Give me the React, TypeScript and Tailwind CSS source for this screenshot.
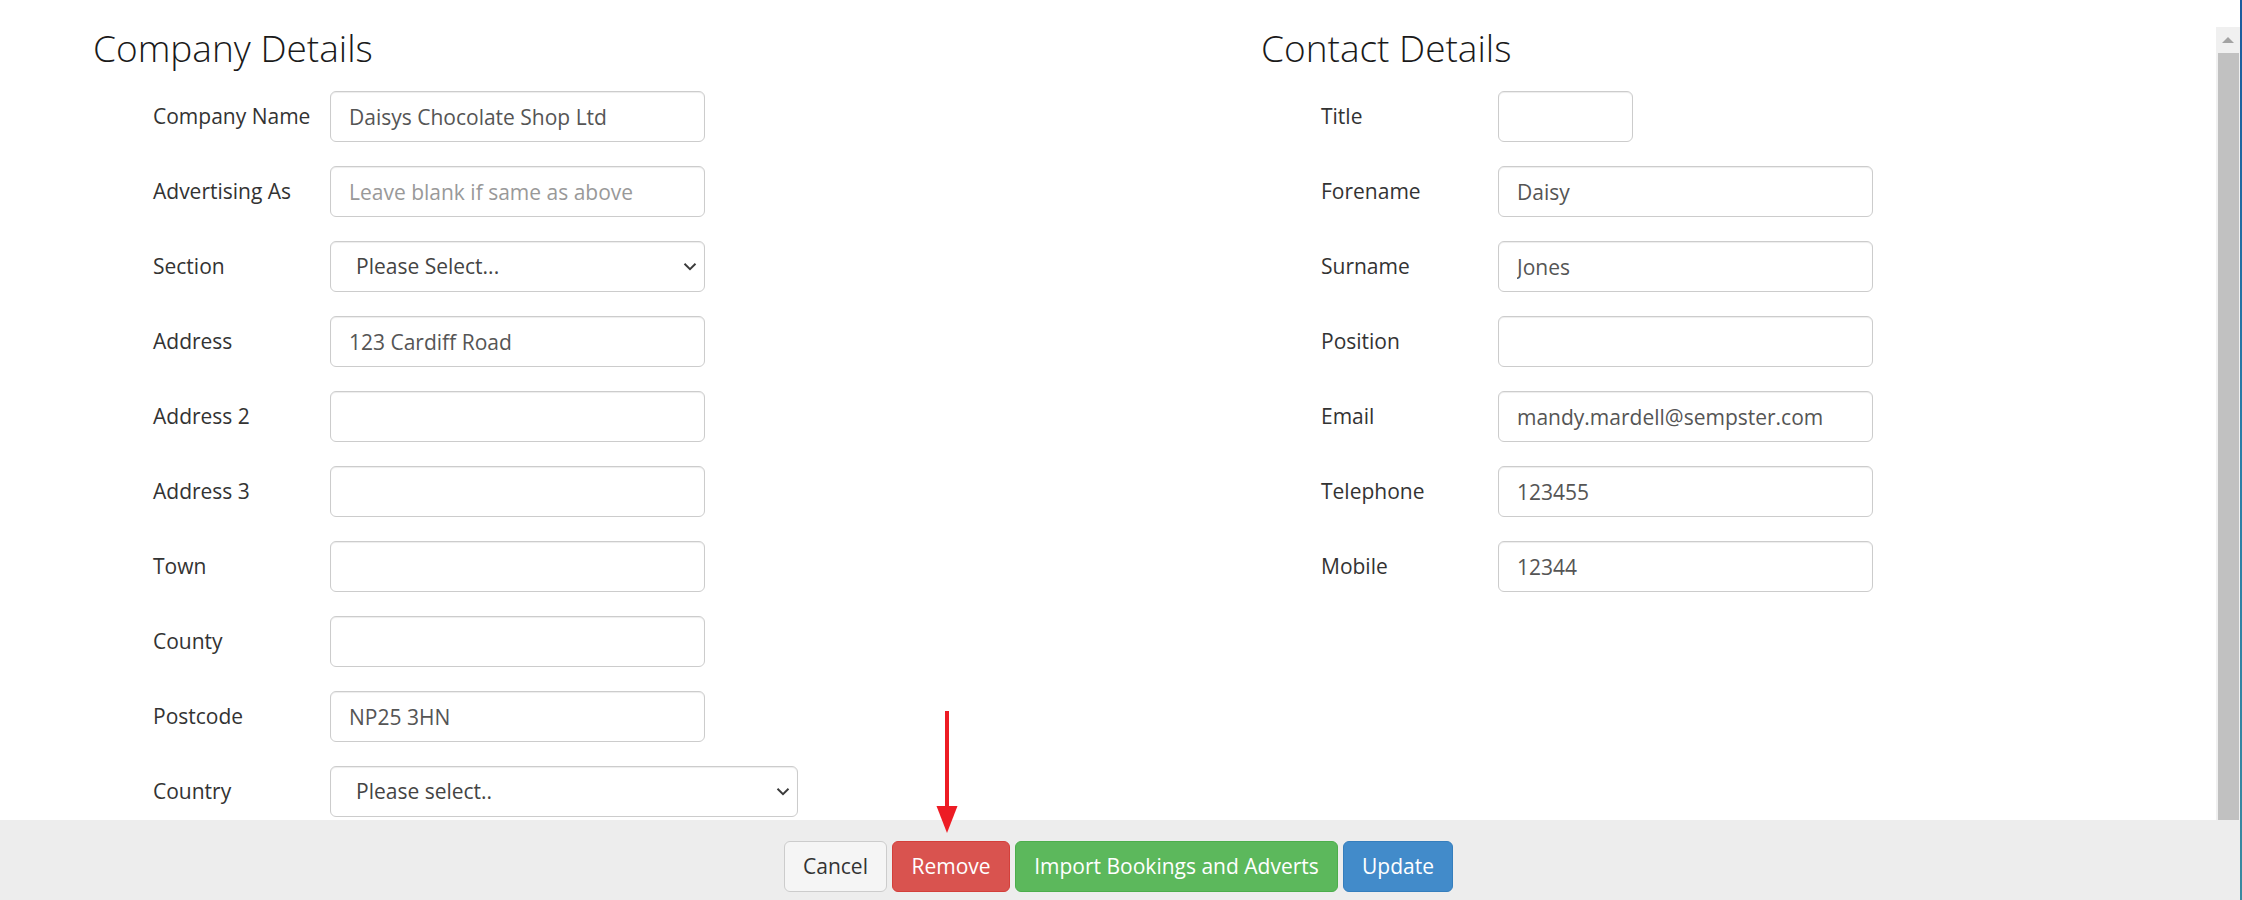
import React from "react";

type Field = { label: string; value?: string; placeholder?: string; select?: boolean; w?: string };

const left: Field[] = [
  { label: "Company Name", value: "Daisys Chocolate Shop Ltd" },
  { label: "Advertising As", placeholder: "Leave blank if same as above" },
  { label: "Section", value: "Please Select...", select: true },
  { label: "Address", value: "123 Cardiff Road" },
  { label: "Address 2", value: "" },
  { label: "Address 3", value: "" },
  { label: "Town", value: "" },
  { label: "County", value: "" },
  { label: "Postcode", value: "NP25 3HN" },
  { label: "Country", value: "Please select..", select: true, w: "w-[468px]" },
];

const right: Field[] = [
  { label: "Title", value: "", w: "w-[135px]" },
  { label: "Forename", value: "Daisy" },
  { label: "Surname", value: "Jones" },
  { label: "Position", value: "" },
  { label: "Email", value: "mandy.mardell@sempster.com" },
  { label: "Telephone", value: "123455" },
  { label: "Mobile", value: "12344" },
];

function Chevron() {
  return (
    <svg width="14" height="9" viewBox="0 0 14 9" className="shrink-0">
      <path d="M1.5 1.8 L7 7.2 L12.5 1.8" fill="none" stroke="#3a3a3a" strokeWidth="1.9" />
    </svg>
  );
}

function Row({ f }: { f: Field }) {
  const w = f.w ?? "w-[375px]";
  return (
    <div className="flex items-center h-[51px]">
      <label className="w-[177px] shrink-0 text-[#333]">{f.label}</label>
      {f.select ? (
        <div
          className={`${w} h-[51px] border border-[#ccc] rounded-[6px] bg-white shadow-[inset_0_1px_1px_rgba(0,0,0,0.075)] flex items-center justify-between pl-[25px] pr-[7px] text-[#444]`}
        >
          <span>{f.value}</span>
          <Chevron />
        </div>
      ) : (
        <input
          readOnly
          value={f.value ?? ""}
          placeholder={f.placeholder}
          className={`${w} h-[51px] border border-[#ccc] rounded-[6px] bg-white shadow-[inset_0_1px_1px_rgba(0,0,0,0.075)] px-[18px] text-[#555] placeholder:text-[#999] outline-none`}
        />
      )}
    </div>
  );
}

function Section({ title, fields, width }: { title: string; fields: Field[]; width: string }) {
  return (
    <section className={`${width} shrink-0 pt-[28px]`}>
      <h3 className="text-[37px] leading-[40px] h-[40px] font-light text-[#1a1a1a]">{title}</h3>
      <div className="mt-[23px] pl-[60px] flex flex-col gap-[24px]">
        {fields.map((f) => (
          <Row key={f.label} f={f} />
        ))}
      </div>
    </section>
  );
}

export default function App() {
  return (
    <div className="relative flex w-[2242px] h-[900px] overflow-hidden font-['Open_Sans',sans-serif] text-[21px]">
      <div className="flex-1 flex flex-col">
        <div className="flex h-[820px]">
          <div className="flex-1 bg-white flex pl-[93px]">
            <Section title="Company Details" fields={left} width="w-[1168px]" />
            <Section title="Contact Details" fields={right} width="w-[700px]" />
          </div>
          <div className="w-[24px] flex flex-col bg-white">
            <div className="h-[27px]" />
            <div className="flex-1 bg-[#f0f0f0] flex flex-col">
              <div className="h-[26px] flex items-center justify-center">
                <svg width="12" height="6" viewBox="0 0 12 6">
                  <path d="M0 6 L6 0 L12 6 Z" fill="#a3a3a3" />
                </svg>
              </div>
              <div className="flex-1 ml-[2px] mr-[1px] bg-[#c1c1c1]" />
            </div>
          </div>
        </div>
        <footer className="h-[80px] bg-[#ededed] flex justify-center items-start pt-[21px] gap-[5px] pr-[3px]">
          <button className="w-[103px] h-[51px] rounded-[6px] border border-[#ccc] bg-[#f5f5f5] text-[#333]">Cancel</button>
          <button className="w-[118px] h-[51px] rounded-[6px] border border-[#d43f3a] bg-[#d9534f] text-white">Remove</button>
          <button className="w-[323px] h-[51px] rounded-[6px] border border-[#4cae4c] bg-[#5cb85c] text-white">Import Bookings and Adverts</button>
          <button className="w-[110px] h-[51px] rounded-[6px] border border-[#357ebd] bg-[#428bca] text-white">Update</button>
        </footer>
      </div>
      <div className="w-[2px] h-[900px] bg-gradient-to-b from-[#1a5c9e] via-[#2a7fa8] to-[#3a8aa0]" />
      <svg
        className="absolute left-[935px] top-[709px]"
        width="24"
        height="126"
        viewBox="0 0 24 126"
      >
        <rect x="10" y="2" width="4" height="100" fill="#ed1c24" />
        <path d="M1.5 97 L22.5 97 L12 124 Z" fill="#ed1c24" />
      </svg>
    </div>
  );
}
